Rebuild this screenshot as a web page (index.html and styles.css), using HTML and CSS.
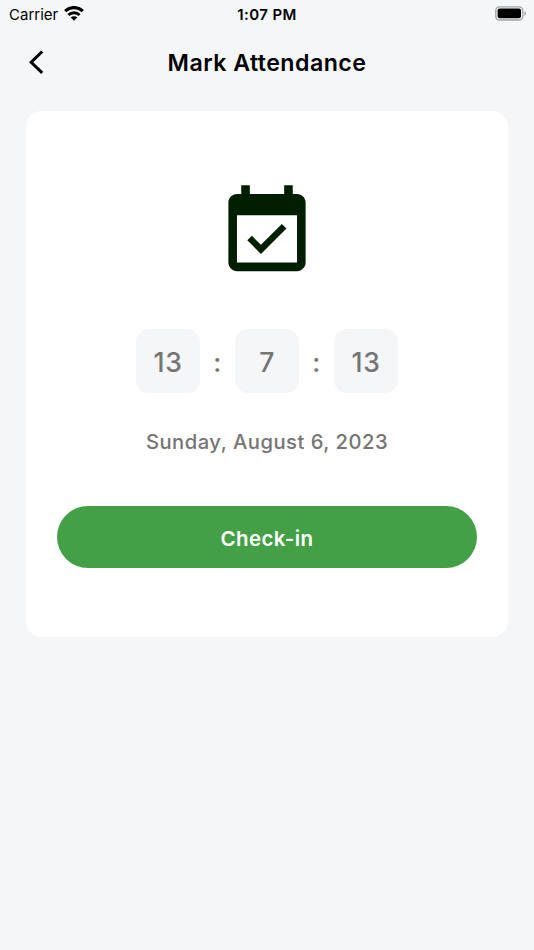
FILE: index.html
```html
<!DOCTYPE html>
<html lang="en">
<head>
    <meta charset="UTF-8">
    <meta name="viewport" content="width=device-width, initial-scale=1.0">
    <link rel="stylesheet" href="styles.css">
    <title>Mark Attendance</title>
</head>
<body>
    <div class="status-bar">
      <div class="status-left">
        <span class="carrier">Carrier</span>
        <svg class="wifi" viewBox="0 0 20 15" width="20" height="15">
          <path d="M1.2 5.2a12.5 12.5 0 0 1 17.6 0" fill="none" stroke="#000" stroke-width="3.3"/>
          <path d="M4.4 9a8 8 0 0 1 11.2 0" fill="none" stroke="#000" stroke-width="2.9"/>
          <path d="M10 14.8L6.7 11.6a4.6 4.6 0 0 1 6.6 0z"/>
        </svg>
      </div>
      <span class="status-time">1:07 PM</span>
      <div class="status-right">
        <svg class="battery" viewBox="0 0 32 15" width="32" height="15">
          <rect x="0.8" y="0.8" width="27" height="13.2" rx="3.6" fill="none" stroke="#a0a1a3" stroke-width="1.3"/>
          <rect x="2.6" y="2.6" width="23.4" height="9.6" rx="2"/>
          <path d="M29.5 5v4.8c2-.8 2-4 0-4.8z" fill="#a0a1a3"/>
        </svg>
      </div>
    </div>

    <div class="header">
      <svg class="back" viewBox="0 0 16 24" width="16" height="24">
        <path d="M14.2 1.5L3.2 12.300l11 10.600" fill="none" stroke="#000" stroke-width="3"/>
      </svg>
      <h1>Mark Attendance</h1>
    </div>

    <div class="card">
      <svg class="calendar" viewBox="0 0 24 24" width="103" height="103">
        <path fill="#001e00" d="M16.53 11.06L15.47 10l-4.88 4.88-2.12-2.12-1.06 1.06L10.59 17l5.94-5.94zM19 3h-1V1h-2v2H8V1H6v2H5c-1.11 0-1.99.9-1.99 2L3 19c0 1.1.89 2 2 2h14c1.1 0 2-.9 2-2V5c0-1.1-.9-2-2-2zm0 16H5V8h14v11z"/>
      </svg>
      <div class="clock">
        <span class="digit">13</span>
        <span class="colon">:</span>
        <span class="digit">7</span>
        <span class="colon">:</span>
        <span class="digit">13</span>
      </div>
      <p class="date">Sunday, August 6, 2023</p>
      <button class="check-in">Check-in</button>
    </div>
</body>
</html>
```
FILE: styles.css
```css
* {
  box-sizing: border-box;
}

body {
  margin: 0;
  min-height: 950px;
  background-color: #f5f6f8;
  font-family: Inter, "Liberation Sans", sans-serif;
  color: #000;
}

.status-bar {
  display: grid;
  grid-template-columns: 1fr auto 1fr;
  align-items: center;
  height: 28px;
  padding: 0 7px 0 7px;
}

.status-left {
  display: flex;
  align-items: center;
  gap: 6px;
  padding-left: 2px;
}

.carrier {
  font-size: 15px;
}

.wifi {
  margin-top: -2px;
}

.status-time {
  font-size: 15px;
  font-weight: 600;
  letter-spacing: 0.4px;
}

.status-right {
  display: flex;
  justify-content: flex-end;
}

.battery {
  margin-top: -2px;
}

.header {
  display: grid;
  grid-template-columns: 16px 1fr 16px;
  align-items: center;
  height: 68px;
  padding: 0 28px;
}

.header h1 {
  margin: 0;
  padding-top: 1px;
  font-size: 23.2px;
  font-weight: 600;
  letter-spacing: 0.45px;
  text-align: center;
}

.card {
  display: flex;
  flex-direction: column;
  align-items: center;
  height: 526px;
  margin: 15px 26px 0;
  padding: 70px 31px 0;
  background-color: #fff;
  border-radius: 16px;
}

.calendar {
  width: 104px;
}

.clock {
  display: flex;
  margin-top: 45px;
  font-size: 26.5px;
  font-weight: 500;
  line-height: 67px;
  letter-spacing: 0.6px;
  text-align: center;
  color: #757575;
}

.digit {
  width: 64px;
  height: 64px;
  background-color: #f5f6f8;
  border-radius: 13px;
}

.colon {
  width: 35px;
}

.date {
  margin: 33px 0 0;
  font-size: 20.2px;
  font-weight: 500;
  line-height: 26px;
  letter-spacing: 0.5px;
  color: #757575;
}

.check-in {
  width: 100%;
  height: 62px;
  margin-top: 51px;
  padding: 3px 0 0;
  border: none;
  border-radius: 31px;
  background-color: #43a047;
  color: #fff;
  font-family: inherit;
  font-size: 20.5px;
  font-weight: 600;
  letter-spacing: 0.4px;
}
```
